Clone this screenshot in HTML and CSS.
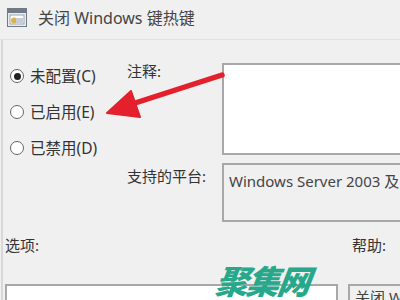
FILE: index.html
```html
<!DOCTYPE html>
<html lang="zh-CN">
<head>
<meta charset="utf-8">
<title>关闭 Windows 键热键</title>
<link rel="stylesheet" href="styles.css">
</head>
<body>
<div class="window">
  <header class="titlebar">
    <svg class="app-icon" width="20" height="19" viewBox="0 0 20 19">
      <rect x="0.5" y="0.5" width="19" height="18" fill="#e9ecef" stroke="#6f7a86"/>
      <rect x="1" y="1" width="18" height="4" fill="#6f7a86"/>
      <rect x="3" y="7" width="14" height="9" fill="#ffffff" stroke="#9aa3ad" stroke-width="1"/>
      <circle cx="7" cy="12.5" r="3" fill="#d9b24a"/>
      <rect x="9" y="10" width="7" height="5" fill="#c8ccd2"/>
    </svg>
    <span class="title">关闭 Windows 键热键</span>
  </header>
  <div class="content">
    <div class="top">
      <div class="radios">
        <div class="radio"><span class="circle checked"></span><span>未配置(C)</span></div>
        <div class="radio"><span class="circle"></span><span>已启用(E)</span></div>
        <div class="radio"><span class="circle"></span><span>已禁用(D)</span></div>
      </div>
      <div class="fields">
        <div class="label label-comment">注释:</div>
        <div class="box box-comment"></div>
        <div class="label label-platform">支持的平台:</div>
        <div class="box box-platform">Windows Server 2003 及以上版本</div>
      </div>
    </div>
    <div class="sections">
      <div class="sec-label">选项:</div>
      <div class="sec-label sec-help">帮助:</div>
      <div class="box box-options"></div>
      <div class="box box-help">关闭 Windows 键热键。</div>
    </div>
  </div>
  <svg class="arrow" width="400" height="300" viewBox="0 0 400 300">
    <line x1="222" y1="75" x2="132" y2="104" stroke="#e3202b" stroke-width="5.5" stroke-linecap="round"/>
    <polygon points="107,113 131,91 140,117" fill="#e3202b" stroke="#e3202b" stroke-width="2" stroke-linejoin="round"/>
  </svg>
  <div class="watermark">聚集网</div>
</div>
</body>
</html>
```
FILE: styles.css
```css
html, body {
  margin: 0;
  padding: 0;
}
body {
  background: #f0f0f0;
  font-family: "Noto Sans", "Noto Sans CJK SC", sans-serif;
  color: #333333;
}
.window {
  position: relative;
  width: 400px;
  height: 300px;
  overflow: hidden;
  background: #f0f0f0;
}
.titlebar {
  height: 40px;
  box-sizing: border-box;
  border-bottom: 1px solid #e2e2e2;
  display: flex;
  align-items: center;
  padding-left: 7px;
  padding-bottom: 4px;
  gap: 11px;
}
.app-icon {
  display: block;
  flex: none;
}
.title {
  font-size: 16px;
  color: #444444;
  line-height: 20px;
}
.content {
  box-shadow: inset 1px 0 0 #f0f0f0, inset 3px 0 0 #d8d8d8;
  padding-top: 23px;
  height: 260px;
}
.top {
  display: flex;
}
.radios {
  width: 127px;
  flex: none;
  display: flex;
  flex-direction: column;
  gap: 10px;
  padding-left: 10px;
  box-sizing: border-box;
}
.radio {
  height: 26px;
  display: flex;
  align-items: center;
  gap: 6px;
  font-size: 15.5px;
  line-height: 20px;
}
.circle {
  width: 12px;
  height: 12px;
  border: 1px solid #666666;
  border-radius: 50%;
  background: #ffffff;
  position: relative;
  flex: none;
}
.circle.checked::after {
  content: "";
  position: absolute;
  left: 2.5px;
  top: 2.5px;
  width: 7px;
  height: 7px;
  border-radius: 50%;
  background: #222222;
}
.fields {
  display: grid;
  grid-template-columns: 95px 200px;
  grid-template-rows: 92px 59px;
  row-gap: 8px;
}
.label {
  font-size: 15px;
  line-height: 16px;
}
.label-platform {
  padding-top: 5px;
}
.box {
  box-sizing: border-box;
  border: 2px solid #a8a8a8;
}
.box-comment {
  background: #ffffff;
}
.box-platform {
  background: #f0f0f0;
  font-size: 15px;
  line-height: 20px;
  padding: 6px 0 0 5px;
  white-space: nowrap;
  color: #444444;
}
.sections {
  display: grid;
  grid-template-columns: 333px 80px;
  grid-template-rows: 20px 40px;
  column-gap: 10px;
  row-gap: 29px;
  margin-top: 13px;
  padding-left: 5px;
}
.sec-label {
  font-size: 15px;
  line-height: 20px;
}
.sec-help {
  padding-left: 4px;
}
.box-options {
  background: #ffffff;
}
.box-help {
  background: #f0f0f0;
  font-size: 15px;
  line-height: 20px;
  padding: 1px 0 0 5px;
  white-space: nowrap;
  color: #444444;
}
.arrow {
  position: absolute;
  left: 0;
  top: 0;
  pointer-events: none;
}
.watermark {
  position: absolute;
  left: 216px;
  top: 262px;
  font-family: "Noto Sans CJK SC", sans-serif;
  font-size: 33px;
  font-weight: 900;
  font-style: italic;
  line-height: 36px;
  color: #27a88b;
  letter-spacing: -2px;
  transform: skewX(-8deg);
}
```
